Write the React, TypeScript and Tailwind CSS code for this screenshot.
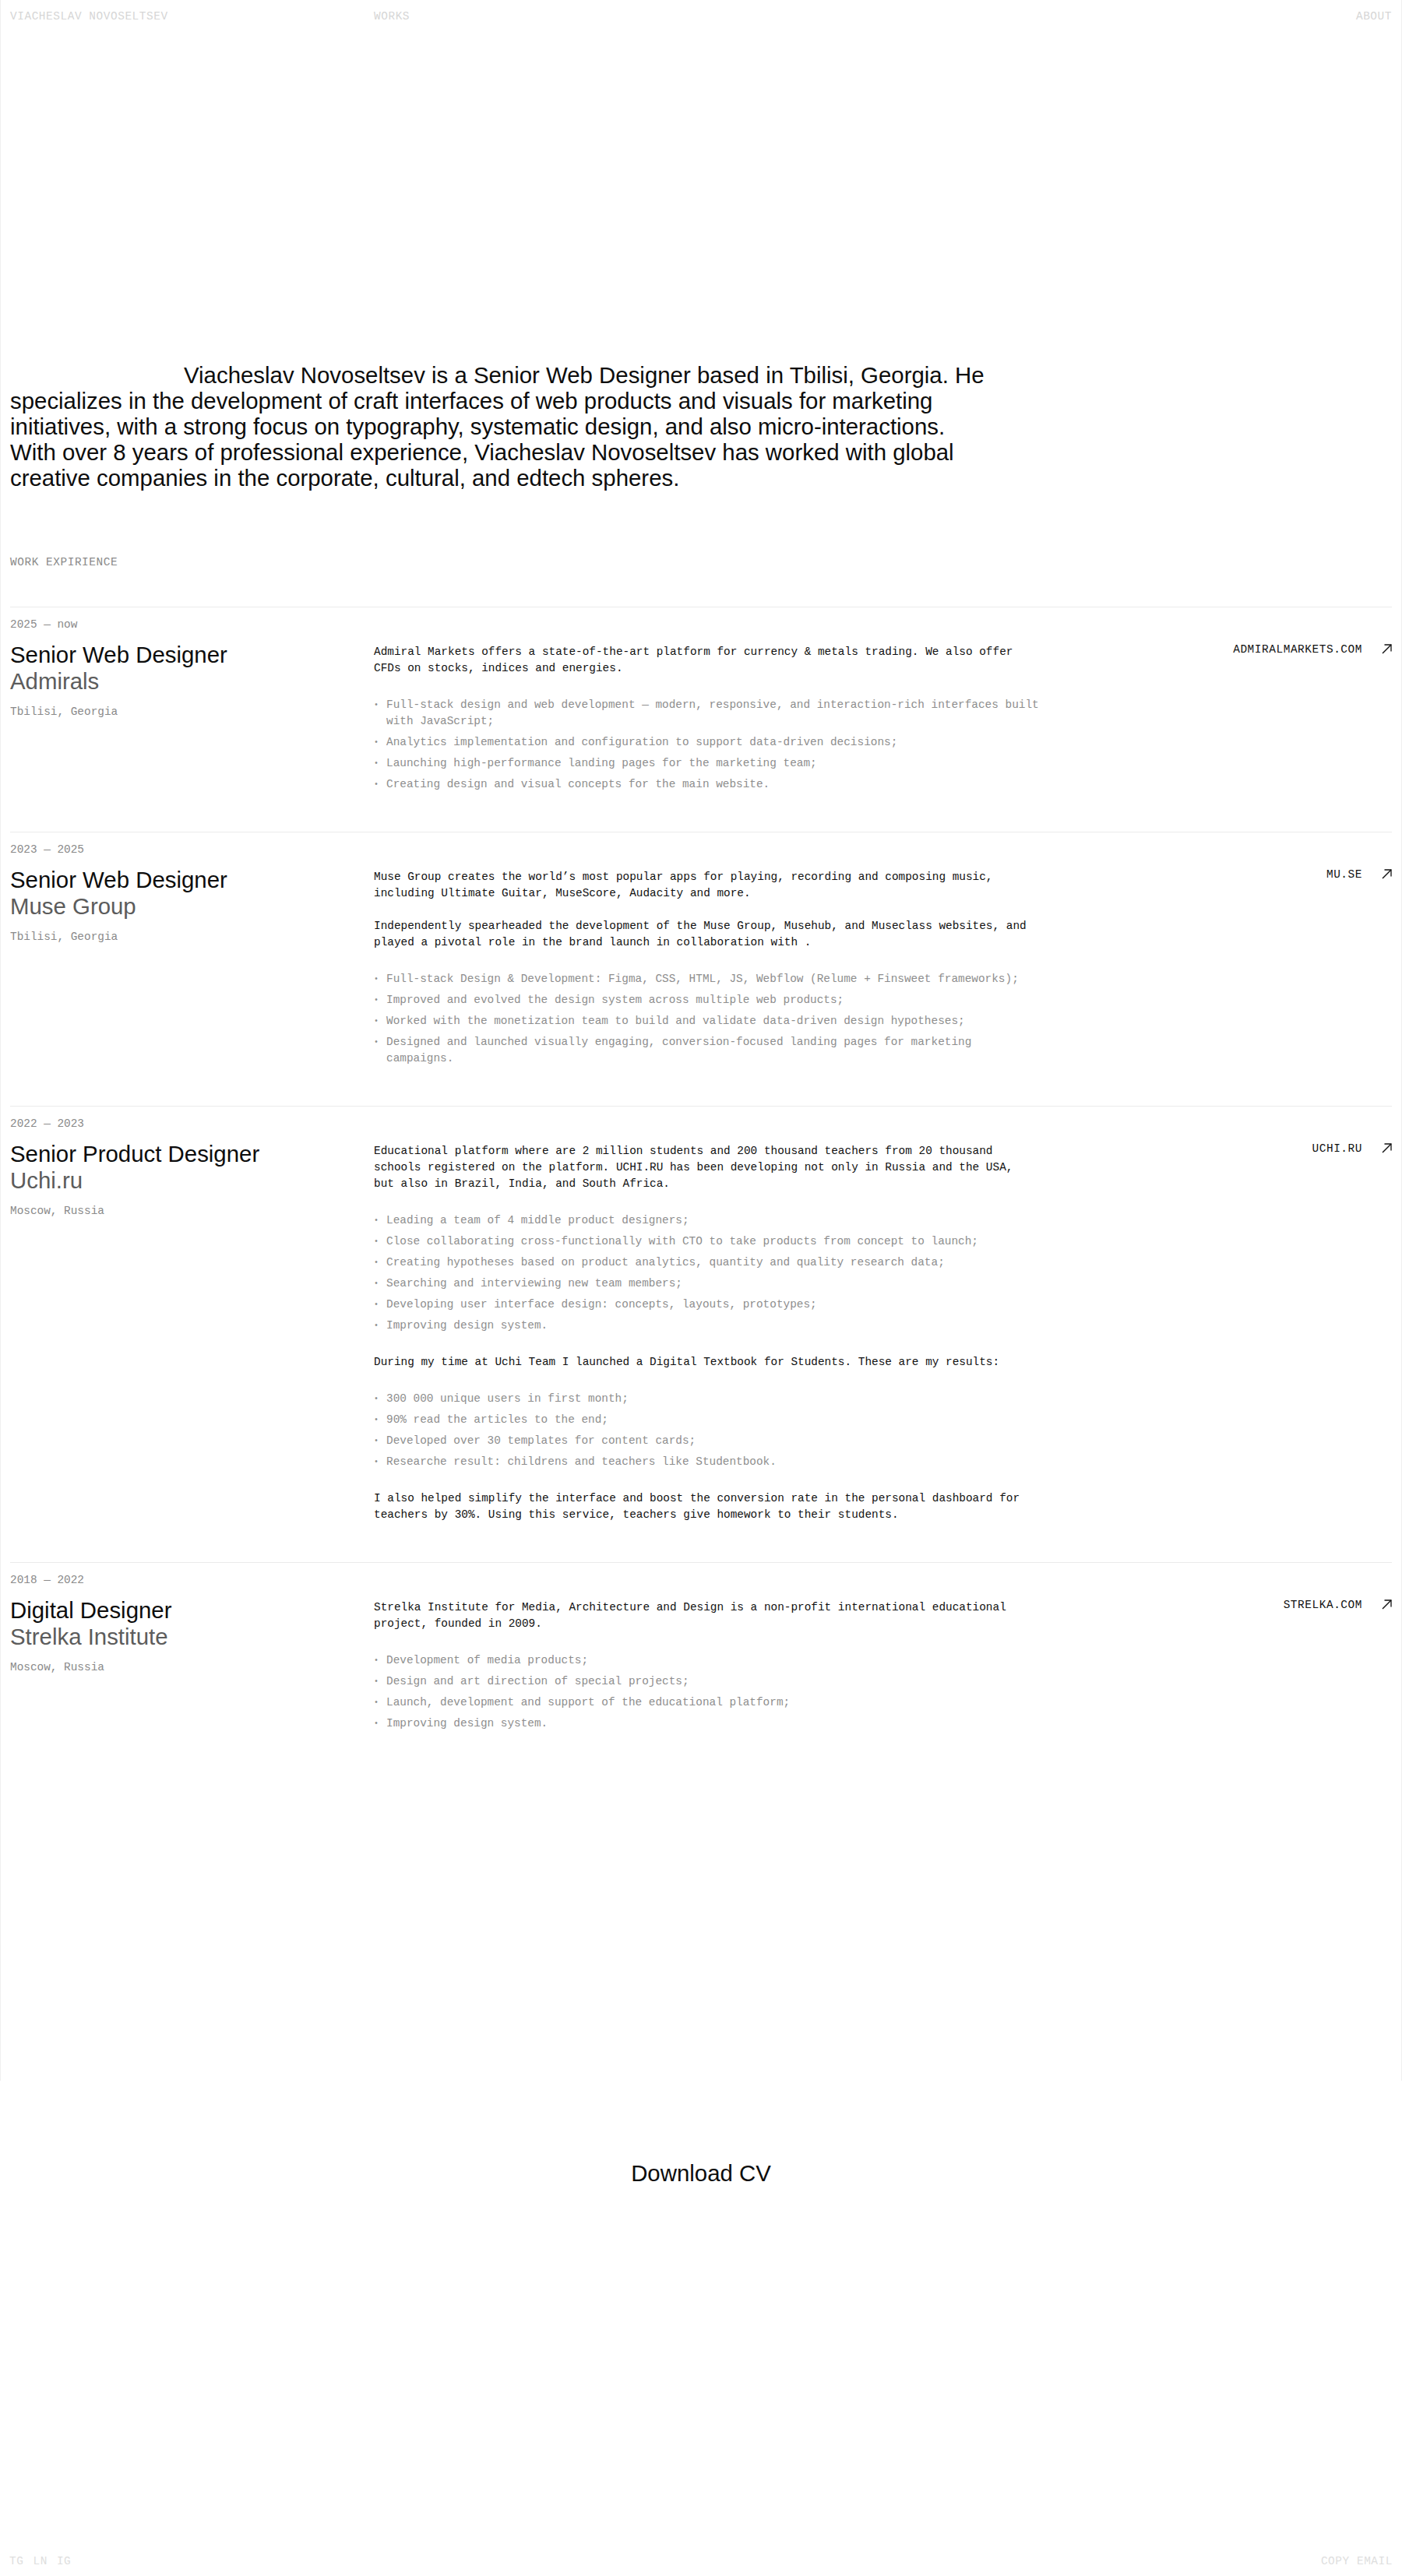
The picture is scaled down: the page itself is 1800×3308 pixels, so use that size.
import React from "react";

type Block = { kind: "p"; text: string } | { kind: "ul"; items: string[] };

type Job = {
  period: string;
  title: string;
  company: string;
  location: string;
  site: string;
  blocks: Block[];
};

const jobs: Job[] = [
  {
    period: "2025 — now",
    title: "Senior Web Designer",
    company: "Admirals",
    location: "Tbilisi, Georgia",
    site: "ADMIRALMARKETS.COM",
    blocks: [
      {
        kind: "p",
        text: "Admiral Markets offers a state-of-the-art platform for currency & metals trading. We also offer CFDs on stocks, indices and energies.",
      },
      {
        kind: "ul",
        items: [
          "Full-stack design and web development — modern, responsive, and interaction-rich interfaces built with JavaScript;",
          "Analytics implementation and configuration to support data-driven decisions;",
          "Launching high-performance landing pages for the marketing team;",
          "Creating design and visual concepts for the main website.",
        ],
      },
    ],
  },
  {
    period: "2023 — 2025",
    title: "Senior Web Designer",
    company: "Muse Group",
    location: "Tbilisi, Georgia",
    site: "MU.SE",
    blocks: [
      {
        kind: "p",
        text: "Muse Group creates the world’s most popular apps for playing, recording and composing music, including Ultimate Guitar, MuseScore, Audacity and more.",
      },
      {
        kind: "p",
        text: "Independently spearheaded the development of the Muse Group, Musehub, and Museclass websites, and played a pivotal role in the brand launch in collaboration with .",
      },
      {
        kind: "ul",
        items: [
          "Full-stack Design & Development: Figma, CSS, HTML, JS, Webflow (Relume + Finsweet frameworks);",
          "Improved and evolved the design system across multiple web products;",
          "Worked with the monetization team to build and validate data-driven design hypotheses;",
          "Designed and launched visually engaging, conversion-focused landing pages for marketing campaigns.",
        ],
      },
    ],
  },
  {
    period: "2022 — 2023",
    title: "Senior Product Designer",
    company: "Uchi.ru",
    location: "Moscow, Russia",
    site: "UCHI.RU",
    blocks: [
      {
        kind: "p",
        text: "Educational platform where are 2 million students and 200 thousand teachers from 20 thousand schools registered on the platform. UCHI.RU has been developing not only in Russia and the USA, but also in Brazil, India, and South Africa.",
      },
      {
        kind: "ul",
        items: [
          "Leading a team of 4 middle product designers;",
          "Close collaborating cross-functionally with CTO to take products from concept to launch;",
          "Creating hypotheses based on product analytics, quantity and quality research data;",
          "Searching and interviewing new team members;",
          "Developing user interface design: concepts, layouts, prototypes;",
          "Improving design system.",
        ],
      },
      {
        kind: "p",
        text: "During my time at Uchi Team I launched a Digital Textbook for Students. These are my results:",
      },
      {
        kind: "ul",
        items: [
          "300 000 unique users in first month;",
          "90% read the articles to the end;",
          "Developed over 30 templates for content cards;",
          "Researche result: childrens and teachers like Studentbook.",
        ],
      },
      {
        kind: "p",
        text: "I also helped simplify the interface and boost the conversion rate in the personal dashboard for teachers by 30%. Using this service, teachers give homework to their students.",
      },
    ],
  },
  {
    period: "2018 — 2022",
    title: "Digital Designer",
    company: "Strelka Institute",
    location: "Moscow, Russia",
    site: "STRELKA.COM",
    blocks: [
      {
        kind: "p",
        text: "Strelka Institute for Media, Architecture and Design is a non-profit international educational project, founded in 2009.",
      },
      {
        kind: "ul",
        items: [
          "Development of media products;",
          "Design and art direction of special projects;",
          "Launch, development and support of the educational platform;",
          "Improving design system.",
        ],
      },
    ],
  },
];

function ArrowUpRight() {
  return (
    <svg
      width="13"
      height="13"
      viewBox="0 0 13 13"
      fill="none"
      stroke="currentColor"
      strokeWidth="1.3"
      aria-hidden="true"
    >
      <path d="M1 12L12 1" />
      <path d="M3.5 1H12V9.5" />
    </svg>
  );
}

function Blocks({ blocks }: { blocks: Block[] }) {
  return (
    <>
      {blocks.map((b, i) => {
        const prev = blocks[i - 1];
        const mt =
          i === 0
            ? ""
            : prev.kind === "p" && b.kind === "p"
              ? "mt-[21px]"
              : "mt-[26px]";
        if (b.kind === "p") {
          return (
            <p key={i} className={`${mt} max-w-[848px] text-[#111111]`}>
              {b.text}
            </p>
          );
        }
        return (
          <ul key={i} className={`${mt} flex flex-col gap-[6px] text-[#8e8e8e]`}>
            {b.items.map((item, j) => (
              <li key={j} className="flex">
                <span className="w-[16px] shrink-0 text-[10px]">•</span>
                <span>{item}</span>
              </li>
            ))}
          </ul>
        );
      })}
    </>
  );
}

function JobEntry({ job }: { job: Job }) {
  return (
    <section className="border-t border-[#ebebeb] pt-[12px] pb-[50px]">
      <div className="text-[#8a8a8a]">{job.period}</div>
      <div className="mt-[11px] grid grid-cols-[467px_855px_1fr]">
        <div>
          <h3 className="font-['Liberation_Sans',Arial,sans-serif] text-[29.4px] leading-[34px] text-[#0d0d0d]">
            {job.title}
          </h3>
          <p className="font-['Liberation_Sans',Arial,sans-serif] text-[29.4px] leading-[34px] text-[#5c5c5c]">
            {job.company}
          </p>
          <p className="mt-[12px] text-[#8a8a8a]">{job.location}</p>
        </div>
        <div className="pt-[3px]">
          <Blocks blocks={job.blocks} />
        </div>
        <div className="flex items-start justify-end text-[#111111]">
          <a href="#" className="uppercase tracking-[0.04em]">
            {job.site}
          </a>
          <span className="ml-[25px] mt-[3px]">
            <ArrowUpRight />
          </span>
        </div>
      </div>
    </section>
  );
}

export default function App() {
  return (
    <div className="min-h-[3308px] bg-white font-['Liberation_Mono',monospace] text-[14.4px] leading-[21px] text-[#111111]">
      <main className="min-h-[2672px] border-x border-[#f0f0f0] px-[12px]">
        <nav className="grid grid-cols-[467px_855px_1fr] py-[11px] uppercase tracking-[0.04em] text-[#d6d6d6]">
          <a href="#">Viacheslav Novoseltsev</a>
          <a href="#">Works</a>
          <a href="#" className="justify-self-end">
            About
          </a>
        </nav>

        <p className="mt-[422px] max-w-[1263px] indent-[223px] font-['Liberation_Sans',Arial,sans-serif] text-[29.4px] leading-[33px] text-[#0d0d0d]">
          Viacheslav Novoseltsev is a Senior Web Designer based in Tbilisi, Georgia. He specializes in
          the development of craft interfaces of web products and visuals for marketing initiatives,
          with a strong focus on typography, systematic design, and also micro-interactions. With over
          8 years of professional experience, Viacheslav Novoseltsev has worked with global creative
          companies in the corporate, cultural, and edtech spheres.
        </p>

        <h2 className="mt-[82px] uppercase tracking-[0.04em] text-[#8a8a8a]">Work expirience</h2>

        <div className="mt-[46px]">
          {jobs.map((job) => (
            <JobEntry key={job.site} job={job} />
          ))}
        </div>
      </main>

      <div className="mt-[102px] text-center">
        <a
          href="#"
          className="font-['Liberation_Sans',Arial,sans-serif] text-[29.4px] leading-[33px] text-[#0d0d0d]"
        >
          Download CV
        </a>
      </div>

      <footer className="mt-[471px] flex justify-between px-[12px] uppercase tracking-[0.04em] text-[#dedede]">
        <div className="flex gap-[12px]">
          <a href="#">TG</a>
          <a href="#">LN</a>
          <a href="#">IG</a>
        </div>
        <a href="#">Copy email</a>
      </footer>
    </div>
  );
}
